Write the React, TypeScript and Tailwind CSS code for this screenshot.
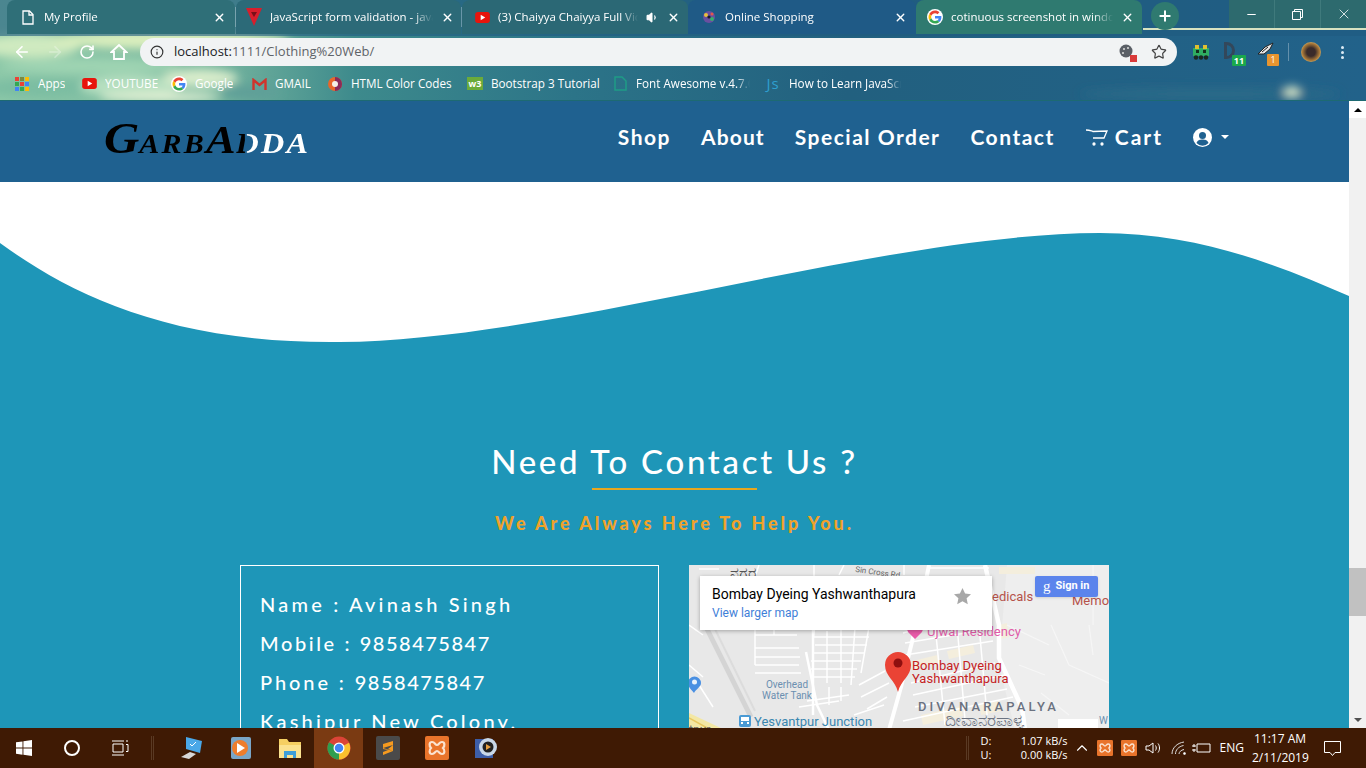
import type React from "react";
import { ArrowLeft, ArrowRight, RotateCw, Info, Star, X, Plus, Minus, ChevronUp, Volume1 } from "lucide-react";

const GoogleG = ({ size = 16 }: { size?: number }) => (
  <svg width={size} height={size} viewBox="0 0 48 48">
    <circle cx="24" cy="24" r="24" fill="#fff" />
    <path fill="#ea4335" d="M24 12.500c2.900 0 5.500 1 7.600 3l5.700-5.700C33.800 6.500 29.300 4.500 24 4.500c-7.600 0-14.200 4.400-17.400 10.800l6.600 5.100c1.600-4.600 5.900-7.900 10.800-7.900z" />
    <path fill="#4285f4" d="M43.200 24.500c0-1.300-.1-2.600-.3-3.800H24v7.500h10.800c-.5 2.500-1.900 4.600-4 6l6.300 4.900c3.700-3.400 6.100-8.500 6.100-14.600z" />
    <path fill="#fbbc05" d="M13.200 27.600c-.4-1.200-.7-2.400-.7-3.600s.2-2.500.7-3.600l-6.600-5.100C5.300 18 4.500 20.900 4.500 24s.8 6 2.100 8.700z" />
    <path fill="#34a853" d="M24 43.500c5.300 0 9.700-1.700 13-4.700l-6.300-4.900c-1.800 1.200-4.100 1.900-6.700 1.900-5.200 0-9.300-3.400-10.800-7.900l-6.600 5.100c3.200 6.100 9.800 10.500 17.400 10.500z" />
  </svg>
);

const YouTube = () => (
  <svg width="15" height="11" viewBox="0 0 16 12">
    <rect width="16" height="12" rx="3" fill="#e8140c" />
    <path d="M6 3l5 3-5 3z" fill="#fff" />
  </svg>
);

const ChromeLogo = () => (
  <svg width="24" height="24" viewBox="0 0 48 48">
    <circle cx="24" cy="24" r="23" fill="#db4437" />
    <path d="M24 24L44 13.500A23 23 0 0 1 24 47z" fill="#fbc02d" />
    <path d="M24 24L24 47A23 23 0 0 1 4 12.500z" fill="#2e9e4f" />
    <circle cx="24" cy="24" r="11" fill="#fff" />
    <circle cx="24" cy="24" r="8.500" fill="#4285f4" />
  </svg>
);

const Xampp = ({ size = 24 }: { size?: number }) => (
  <svg width={size} height={size} viewBox="0 0 24 24">
    <rect width="24" height="24" rx="2" fill="#e9742b" />
    <path d="M7 6c3 0 3 3 5 3s2-3 5-3 3 4 1 6c2 2 2 6-1 6s-3-3-5-3-2 3-5 3-3-4-1-6c-2-2-2-6 1-6z" fill="none" stroke="#fbe3d0" strokeWidth="2.200" />
  </svg>
);

interface TabProps {
  title: string;
  icon: React.ReactNode;
  className: string;
  extra?: React.ReactNode;
}

const Tab: React.FC<TabProps> = ({ title, icon, className, extra }) => (
  <div className={`${className} h-[34px] flex items-center gap-[8px] rounded-t-lg text-white`}>
    <span className="w-[16px] flex justify-center shrink-0">{icon}</span>
    <span className="flex-1 min-w-0 overflow-hidden whitespace-nowrap text-[11.500px] [mask-image:linear-gradient(to_right,black_88%,transparent)]">
      {title}
    </span>
    {extra}
    <X size={13} strokeWidth={2.500} className="shrink-0" />
  </div>
);

const Bookmark = ({ icon, label, width, clip }: { icon: React.ReactNode; label: string; width: string; clip?: string }) => (
  <div className={`${width} flex items-center gap-[8px] shrink-0`}>
    <span className="w-[16px] flex justify-center shrink-0">{icon}</span>
    <span className={`${clip ?? ""} overflow-hidden text-[11.700px] text-white whitespace-nowrap`}>{label}</span>
  </div>
);

const ChromeBar = () => (
  <div className="relative h-[101px] shrink-0 overflow-hidden bg-[linear-gradient(90deg,#8cc8a8_0%,#7ab8a0_15%,#3d8a8c_26%,#2c7488_42%,#22607f_62%,#22628a_100%)] font-['Open_Sans',sans-serif]">
    <svg className="absolute inset-0" width="1366" height="101" viewBox="0 0 1366 101">
      <defs>
        <filter id="blur-cloud" x="-30%" y="-50%" width="160%" height="200%">
          <feGaussianBlur stdDeviation="5" />
        </filter>
      </defs>
      <g filter="url(#blur-cloud)">
        <ellipse cx="30" cy="46" rx="50" ry="12" fill="#cfeac0" />
        <ellipse cx="170" cy="40" rx="120" ry="9" fill="#dcefbe" />
        <ellipse cx="90" cy="66" rx="90" ry="8" fill="#9fd4b2" />
        <ellipse cx="40" cy="88" rx="60" ry="9" fill="#7bbda2" />
        <ellipse cx="130" cy="86" rx="50" ry="11" fill="#b6dfc0" />
        <ellipse cx="200" cy="78" rx="38" ry="9" fill="#d8eccb" />
        <ellipse cx="160" cy="97" rx="60" ry="5" fill="#e2f0d4" />
        <ellipse cx="250" cy="92" rx="30" ry="7" fill="#5f9f98" />
        <ellipse cx="1210" cy="94" rx="130" ry="6" fill="#296a88" />
        <ellipse cx="1292" cy="92" rx="8" ry="6" fill="#d8e6c8" />
      </g>
      <rect x="0" y="0" width="1366" height="36" fill="#1f5a80" opacity="0.6" />
      <rect x="1143" y="28" width="223" height="2" fill="#d8e2c0" />
      <rect x="0" y="100" width="1366" height="1" fill="#1d6a72" />
    </svg>

    <div className="relative flex flex-col">
      <div className="h-[36px] flex items-start">
        <div className="w-[7px]" />
        <Tab
          title="My Profile"
          className="w-[228px] bg-[#2f6f78] pl-[13px] pr-[9px]"
          icon={
            <svg width="12" height="15" viewBox="0 0 12 15" fill="none" stroke="#fff" strokeWidth="1.300">
              <path d="M1 1h6.500L11 4.500V14H1z" />
              <path d="M7 1v4h4" />
            </svg>
          }
        />
        <div className="w-[1px] h-[20px] mt-[7px] bg-white/30" />
        <Tab
          title="JavaScript form validation - javascript"
          className="w-[225px] bg-[#2c6a78] pl-[10px] pr-[7px]"
          icon={
            <svg width="16" height="18" viewBox="0 0 16 18">
              <path d="M0 0h16L8 18z" fill="#d81e2c" />
              <path d="M5 4h6L8 9z" fill="#7a0f18" />
            </svg>
          }
        />
        <div className="w-[1px] h-[20px] mt-[7px] bg-white/30" />
        <Tab
          title="(3) Chaiyya Chaiyya Full Video Song"
          className="w-[226px] bg-[#2b6875] pl-[12px] pr-[8px]"
          icon={<YouTube />}
          extra={<Volume1 size={13} fill="#fff" className="shrink-0" />}
        />
        <Tab
          title="Online Shopping"
          className="w-[228px] bg-[#1f5a86] pl-[13px] pr-[9px]"
          icon={
            <svg width="16" height="16" viewBox="0 0 16 16">
              <circle cx="8" cy="8" r="6" fill="#6a4fa0" />
              <circle cx="5" cy="6" r="2" fill="#e8c13a" />
              <circle cx="11" cy="10" r="2" fill="#35b06a" />
              <circle cx="8" cy="8" r="1.600" fill="#1b1b2a" />
              <circle cx="11" cy="5" r="1.500" fill="#e2574c" />
            </svg>
          }
        />
        <Tab title="cotinuous screenshot in windows 10" className="w-[226px] bg-[#2f7a70] pl-[11px] pr-[8px]" icon={<GoogleG />} />
        <div className="ml-[9px] mt-[2px] w-[28px] h-[28px] rounded-full bg-[#2f7a70] flex items-center justify-center text-white">
          <Plus size={16} strokeWidth={3} />
        </div>
        <div className="ml-auto flex h-[28px] text-white">
          <div className="w-[46px] bg-[#2d6a6e] flex items-center justify-center border-r border-[#3f7a7c]">
            <Minus size={13} />
          </div>
          <div className="w-[46px] bg-[#2d6a6e] flex items-center justify-center border-r border-[#3f7a7c]">
            <svg width="11" height="11" viewBox="0 0 11 11" fill="none" stroke="#fff">
              <path d="M.5 2.500h8v8h-8zM2.500 2.500v-2h8v8h-2" />
            </svg>
          </div>
          <div className="w-[45px] bg-[#2d6a6e] flex items-center justify-center">
            <X size={16} strokeWidth={1.200} />
          </div>
        </div>
      </div>

      <div className="h-[32px] flex items-center text-white">
        <div className="w-[140px] flex items-center pl-[13px] gap-[15px]">
          <ArrowLeft size={18} strokeWidth={2.200} />
          <ArrowRight size={18} strokeWidth={2.200} className="opacity-30" />
          <RotateCw size={16} strokeWidth={2.400} />
          <svg width="18" height="18" viewBox="0 0 18 18" fill="none" stroke="#fff" strokeWidth="1.800">
            <path d="M1.500 9L9 2l7.500 7H14v7H4V9z" />
          </svg>
        </div>
        <div className="w-[1037px] h-[28px] rounded-full bg-[#f1f3f4] flex items-center pl-[10px] pr-[10px] text-[13px] text-[#5f6368]">
          <Info size={14} className="text-[#333] mr-[10px]" />
          <span className="text-[#202124]">localhost:</span>
          <span>1111/Clothing%20Web/</span>
          <span className="ml-auto relative mr-[16px] w-[16px] h-[16px]">
            <svg width="16" height="16" viewBox="0 0 16 16">
              <circle cx="7" cy="7" r="6.500" fill="#5a5f66" />
              <circle cx="5" cy="5" r="1" fill="#ddd" />
              <circle cx="9" cy="4" r="1" fill="#ddd" />
              <circle cx="4" cy="9" r="1" fill="#ddd" />
            </svg>
            <span className="absolute -right-[2px] -bottom-[2px] w-[7px] h-[7px] bg-[#d93a3a]" />
          </span>
          <Star size={16} strokeWidth={1.800} className="text-[#444]" />
        </div>
        <svg className="ml-[15px]" width="18" height="15" viewBox="0 0 18 15">
          <rect x="1" y="3" width="16" height="8" fill="#2fae62" />
          <rect x="3" y="0" width="4" height="4" fill="#e0c030" />
          <rect x="11" y="0" width="4" height="4" fill="#e0c030" />
          <rect x="4" y="5" width="3" height="3" fill="#15301f" />
          <rect x="11" y="5" width="3" height="3" fill="#15301f" />
          <circle cx="4" cy="12.500" r="2.200" fill="#1a2a20" />
          <circle cx="9" cy="12.500" r="2.200" fill="#1a2a20" />
          <circle cx="14" cy="12.500" r="2.200" fill="#1a2a20" />
        </svg>
        <div className="ml-[14px] relative w-[22px] h-[20px]">
          <span className="absolute left-[0px] top-[0px] w-[11px] h-[17px] rounded-r-full border-[3px] border-[#33475a]" />
          <span className="absolute right-[0px] bottom-[-4px] h-[11px] w-[14px] rounded-[1px] bg-[#1aa84d] text-[9px] font-bold leading-[11px] text-center text-white">11</span>
        </div>
        <div className="ml-[11px] relative w-[22px] h-[20px]">
          <svg className="absolute left-0 top-0" width="18" height="14" viewBox="0 0 18 14">
            <path d="M1 12L8 5l8-4-3 6-6 5z" fill="#e8e8e8" stroke="#222" />
            <path d="M5 10l6-5" stroke="#222" />
          </svg>
          <span className="absolute right-[0px] bottom-[-4px] h-[12px] w-[12px] rounded-[1px] bg-[#e8952f] text-[9px] leading-[12px] text-center text-white">1</span>
        </div>
        <div className="ml-[9px] w-[1px] h-[18px] bg-white/30" />
        <div className="ml-[12px] w-[20px] h-[20px] rounded-full bg-[radial-gradient(circle,#3a2b2a_30%,#a87838_60%,#e4cf90_85%)]" />
        <div className="ml-[20px] flex flex-col gap-[2px]">
          <span className="w-[3px] h-[3px] rounded-full bg-[#dceaf4]" />
          <span className="w-[3px] h-[3px] rounded-full bg-[#dceaf4]" />
          <span className="w-[3px] h-[3px] rounded-full bg-[#dceaf4]" />
        </div>
      </div>

      <div className="h-[32px] flex items-center pl-[14px]">
        <Bookmark
          width="w-[67px]"
          label="Apps"
          icon={
            <span className="grid grid-cols-3 gap-[1px]">
              {["#ea4335", "#7a8a40", "#fbbc05", "#34a853", "#ea4335", "#4285f4", "#4285f4", "#34a853", "#fbbc05"].map((c, i) => (
                <span key={i} className="w-[4px] h-[4px]" style={{ background: c }} />
              ))}
            </span>
          }
        />
        <Bookmark width="w-[90px]" label="YOUTUBE" icon={<YouTube />} />
        <Bookmark width="w-[80px]" label="Google" icon={<GoogleG />} />
        <Bookmark
          width="w-[76px]"
          label="GMAIL"
          icon={
            <svg width="15" height="12" viewBox="0 0 15 12" fill="none" stroke="#d0342c" strokeWidth="2.400">
              <path d="M1.500 12V2l6 5 6-5v10" />
            </svg>
          }
        />
        <Bookmark
          width="w-[140px]"
          label="HTML Color Codes"
          icon={
            <svg width="16" height="16" viewBox="0 0 16 16">
              <circle cx="8" cy="8" r="7" fill="#e8662a" />
              <path d="M8 1a7 7 0 0 1 0 14z" fill="#8a2a5a" />
              <circle cx="8" cy="8" r="3" fill="#f4f0e8" />
            </svg>
          }
        />
        <Bookmark
          width="w-[145px]"
          label="Bootstrap 3 Tutorial"
          clip="text-[11.400px]"
          icon={<span className="w-[16px] h-[13px] bg-[#6bab3a] text-white text-[9px] leading-[13px] font-bold text-center">w3</span>}
        />
        <Bookmark
          width="w-[153px]"
          label="Font Awesome v.4.7.0"
          clip="w-[114px] [mask-image:linear-gradient(to_right,black_88%,transparent)]"
          icon={
            <svg width="13" height="15" viewBox="0 0 13 15" fill="none" stroke="#1f9c86" strokeWidth="1.500">
              <path d="M1 1h7l4 4v9H1z" />
            </svg>
          }
        />
        <Bookmark
          width="w-[137px]"
          label="How to Learn JavaScript"
          clip="w-[112px] [mask-image:linear-gradient(to_right,black_88%,transparent)]"
          icon={<span className="text-[15px] text-[#2e9fd0] leading-none tracking-[1px]">Js</span>}
        />
      </div>
    </div>
  </div>
);

const Logo = () => (
  <div className="flex items-baseline w-[189px] font-['Liberation_Serif',serif] italic font-bold leading-none [transform:scaleX(1.110)] origin-left">
    <span className="text-[44px] text-black">G</span>
    <span className="text-[27px] text-black tracking-[2px]">ARB</span>
    <span className="text-[40px] text-black">A</span>
    <span className="text-[29px] tracking-[2px] text-transparent bg-clip-text bg-[linear-gradient(90deg,#000_38%,#1f6190_38%,#1f6190_45%,#fff_45%)]">D</span>
    <span className="text-[29px] tracking-[2px] text-white">DA</span>
  </div>
);

const NavBar = () => (
  <nav className="h-[81px] shrink-0 bg-[#1f6190] flex items-start pl-[104px] font-['Lato',sans-serif]">
    <div className="mt-[16px]">
      <Logo />
    </div>
    <div className="ml-auto mr-[120px] mt-[22px] flex items-center gap-[30px] text-white text-[21px] font-bold tracking-[1.500px] h-[28px]">
      <span>Shop</span>
      <span className="tracking-[1.100px]">About</span>
      <span>Special Order</span>
      <span>Contact</span>
      <span className="flex items-center gap-[7px] tracking-[2px]">
        <svg width="23" height="18" viewBox="0 0 23 18" fill="none" stroke="#fff" strokeWidth="1.300">
          <path d="M1 2c4 0 5 1 7 1.500L22 3l-3 7H8" />
          <circle cx="9" cy="16" r="1" fill="#fff" />
          <circle cx="17" cy="16" r="1" fill="#fff" />
        </svg>
        Cart
      </span>
      <span className="flex items-center gap-[9px]">
        <svg width="19" height="19" viewBox="0 0 19 19">
          <circle cx="9.500" cy="9.500" r="9.500" fill="#fff" />
          <circle cx="9.500" cy="7.500" r="3.500" fill="#1f6190" />
          <path d="M3.500 15c1-3 3.500-3.500 6-3.500s5 .5 6 3.500a8 8 0 0 1-12 0z" fill="#1f6190" />
        </svg>
        <span className="w-0 h-0 border-x-[4px] border-x-transparent border-t-[4px] border-t-white" />
      </span>
    </div>
  </nav>
);

const Wave = () => (
  <svg className="block shrink-0" width="1349" height="161" viewBox="0 0 1349 161">
    <rect width="1349" height="161" fill="#fff" />
    <path d="M0 61C70 112 170 162 340 160C560 158 880 52 1100 51C1200 51 1280 84 1349 114V161H0z" fill="#1e96b8" />
  </svg>
);

// thin side streets of the embedded map, in map-local coordinates
const thinRoads = [
  "M66 60V100", "M66 70H108", "M85 60V70", "M66 83H110", "M66 92H111", "M66 100H110", "M66 108H112",
  "M126 60L124 76", "M124 72H180", "M126 80H178", "M124 88H176", "M122 96H172", "M122 104H168", "M124 112H166",
  "M138 66V118", "M152 64V118", "M166 62L162 120", "M180 62L172 108",
  "M0 100L14 112", "M10 120L24 142", "M118 136L160 130", "M140 122V140", "M152 122V136",
  "M110 142L150 136", "M170 120L196 106", "M172 132L200 118", "M178 144L198 132", "M165 150L195 140",
  "M214 68L250 58", "M216 78L300 64", "M216 90L304 76", "M222 118L306 98", "M224 130L316 110", "M226 142L318 124",
  "M214 156L324 132", "M246 60L256 160", "M268 60L276 155", "M290 60L298 150",
  "M125 0V12", "M155 0L150 10", "M215 0V10", "M240 3H300", "M70 0L66 12", "M10 4H30", "M0 60L14 70",
];

// the right part of the map is much fainter
const faintRoads = ["M318 60L360 80", "M330 100L356 110", "M362 60L380 100", "M380 100L420 118", "M352 128L380 150", "M400 60L404 90", "M404 0V60"];

const beigeBlocks = ["M224 96l24-6 2 8-24 6z", "M258 86l26-6 2 8-26 6z", "M232 150l40-9 2 10-40 9z", "M290 140l20-4 2 10-20 4z", "M310 2h36v7h-36z", "M310 60l8-2 2 14-8 2z"];

const MapEmbed = () => (
  <div className="relative w-[420px] h-[220px] bg-[#e8e8e8] shrink-0 overflow-hidden font-['Roboto',sans-serif]">
    <svg className="absolute inset-0" width="420" height="220" viewBox="0 0 420 220">
      <path d="M318 0H420V220H340L310 100z" fill="#eeeeee" />
      {beigeBlocks.map((d) => (
        <path key={d} d={d} fill="#f4eedd" />
      ))}
      <g stroke="#fff" strokeWidth="1.500" fill="none">
        {thinRoads.map((d) => (
          <path key={d} d={d} />
        ))}
      </g>
      <g stroke="#f6f6f6" strokeWidth="1.200" fill="none">
        {faintRoads.map((d) => (
          <path key={d} d={d} />
        ))}
      </g>
      <path d="M16 60L62 152" stroke="#d4d4d4" strokeWidth="5" fill="none" />
      <path d="M24 60L66 146" stroke="#dcdcdc" strokeWidth="2" fill="none" />
      <path d="M240 0L232 40L212 122L200 165" stroke="#fff" strokeWidth="4" fill="none" />
      <path d="M296 0L310 60V93L333 143L336 165" stroke="#fff" strokeWidth="4.500" fill="none" />
      <path d="M117 87L128 140L140 165" stroke="#fff" strokeWidth="2.500" fill="none" />
      <path d="M124 64V150" stroke="#fff" strokeWidth="2.500" fill="none" />
      <path d="M0 148L36 165H0z" fill="#f3e7a4" />
      <path d="M0 153L22 165" stroke="#e8c860" strokeWidth="1.500" />
      <path d="M5 128c-3-4-6-6-6-10a6.500 6.500 0 0 1 13 0c0 4-5 6-7 10z" fill="#4a90e2" />
      <circle cx="5.500" cy="117" r="2.500" fill="#e8f2fc" />
      <path d="M209 127c-3-12-13-16-13-27a13 13 0 0 1 26 0c0 11-10 15-13 27z" fill="#ea4335" />
      <circle cx="209" cy="98" r="4.500" fill="#8f0f0f" />
      <path d="M226 74l-7-7a4 4 0 0 1 7-4 4 4 0 0 1 7 4z" fill="#e85aa8" />
    </svg>

    <span className="absolute left-[41px] top-[-5px] text-[16px] font-medium text-[#555] font-['Noto_Sans',sans-serif]">ನಗರ</span>
    <span className="absolute left-[166px] top-[2px] text-[8px] text-[#666] rotate-[8deg]">Sin Cross Rd</span>
    <span className="absolute left-[303px] top-[22px] text-[13px] text-[#b5524a]">edicals</span>
    <span className="absolute left-[383px] top-[26px] text-[13px] text-[#b5524a]">Memor</span>
    <span className="absolute left-[238px] top-[59px] text-[13px] leading-[15px] text-[#e05ca8]">Ujwal Residency</span>
    <span className="absolute left-[223px] top-[94px] text-[13px] leading-[13px] text-[#c5221f]">
      Bombay Dyeing
      <br />
      Yashwanthapura
    </span>
    <span className="absolute left-[58px] top-[114px] w-[80px] text-center text-[10px] leading-[11px] text-[#6b8fb0]">
      Overhead
      <br />
      Water Tank
    </span>
    <span className="absolute left-[229px] top-[132px] text-[13px] font-medium tracking-[3.100px] text-[#6b7280]">DIVANARAPALYA</span>
    <span className="absolute left-[256px] top-[143px] text-[17px] leading-[24px] font-medium text-[#6b7280] font-['Noto_Sans',sans-serif]">ದೀವಾನರಪಾಳ್ಯ</span>
    <span className="absolute left-[50px] top-[150px] w-[12px] h-[12px] rounded-[2px] bg-[#4a9ad4] flex flex-col items-center pt-[2px]">
      <span className="w-[8px] h-[4px] bg-white" />
      <span className="w-[8px] h-[2px] mt-[1px] border-x-2 border-white" />
    </span>
    <span className="absolute left-[65px] top-[147px] text-[13px] text-[#3a86b0] whitespace-nowrap">Yesvantpur Junction</span>
    <span className="absolute left-[0px] top-[156px] text-[12px] text-[#666]">tpur</span>
    <span className="absolute left-[369px] top-[154px] w-[40px] h-[20px] bg-white" />
    <span className="absolute left-[410px] top-[148px] text-[10px] text-[#6b8fb0]">W</span>

    <div className="absolute left-[11px] top-[11px] w-[292px] h-[54px] bg-white shadow-[0_1px_4px_rgba(0,0,0,0.3)] pl-[12px] pt-[10px]">
      <div className="text-[14px] leading-[16px] text-black">Bombay Dyeing Yashwanthapura</div>
      <div className="text-[12px] leading-[14px] mt-[4px] text-[#3f80d8]">View larger map</div>
      <svg className="absolute left-[254px] top-[12px]" width="17" height="17" viewBox="0 0 17 17">
        <path d="M8.500 0l2.600 5.600 5.900.7-4.400 4 1.200 6-5.300-3-5.300 3 1.200-6L0 6.300l5.900-.7z" fill="#a8a8a8" />
      </svg>
    </div>
    <div className="absolute left-[346px] top-[11px] w-[63px] h-[21px] rounded-[2px] bg-[#5b84ec] text-white flex items-center pl-[8px] gap-[5px] text-[11px] font-bold shadow-sm">
      <span className="text-[15px] font-normal leading-none font-['Liberation_Serif',serif]">g</span>
      Sign in
    </div>
  </div>
);

const ContactSection = () => (
  <section className="flex-1 bg-[#1e96b8] flex flex-col items-center pt-[98px] font-['Lato',sans-serif]">
    <h2 className="text-[33px] leading-[40px] tracking-[2.700px] text-white font-medium">Need To Contact Us ?</h2>
    <div className="mt-[7px] w-[165px] h-[2px] bg-[#e8a71f]" />
    <p className="mt-[22px] text-[18px] leading-[22px] font-black tracking-[2.900px] text-[#f0a22a]">We Are Always Here To Help You.</p>
    <div className="mt-[31px] flex gap-[30px] self-start ml-[240px]">
      <div className="w-[419px] h-[220px] border border-white pt-[19px] pl-[19px] text-[20px] leading-[39px] tracking-[3.200px] text-white font-medium shrink-0">
        <p>Name : Avinash Singh</p>
        <p className="tracking-[2.600px]">
          Mobile : <span className="tracking-[1.500px]">9858475847</span>
        </p>
        <p className="tracking-[2.900px]">
          Phone : <span className="tracking-[1.500px]">9858475847</span>
        </p>
        <p>Kashipur New Colony,</p>
      </div>
      <MapEmbed />
    </div>
  </section>
);

const Scrollbar = () => (
  <div className="w-[17px] shrink-0 bg-[#f1f1f1] flex flex-col items-center justify-between relative">
    <div className="h-[17px] flex items-center justify-center bg-white w-full">
      <span className="w-0 h-0 border-x-[4px] border-x-transparent border-b-[4px] border-b-black" />
    </div>
    <div className="absolute left-0 top-[467px] w-[17px] h-[48px] bg-[#c1c1c1]" />
    <div className="h-[17px] flex items-center justify-center w-full">
      <span className="w-0 h-0 border-x-[4px] border-x-transparent border-t-[4px] border-t-[#505050]" />
    </div>
  </div>
);

const pinned: { key: string; node: React.ReactNode; active?: boolean }[] = [
  {
    key: "pc",
    node: (
      <svg width="24" height="24" viewBox="0 0 24 24">
        <path d="M6 1l16 4-2 12-14-4z" fill="#4aa8e8" />
        <path d="M10 8l2 2 4-4" stroke="#fff" fill="none" />
        <path d="M1 21l9-5 6 2-7 5z" fill="#d8d8d8" />
      </svg>
    ),
  },
  {
    key: "media",
    node: (
      <svg width="22" height="24" viewBox="0 0 22 24">
        <rect x="1" y="1" width="20" height="22" rx="2" fill="#7aa6c8" />
        <circle cx="10" cy="12" r="8" fill="#ee7d2c" />
        <path d="M7 7l8 5-8 5z" fill="#fff" />
      </svg>
    ),
  },
  {
    key: "folder",
    node: (
      <svg width="24" height="22" viewBox="0 0 24 22">
        <path d="M1 2h8l2 3h12v16H1z" fill="#f5cf62" />
        <path d="M1 8h22v13H1z" fill="#fbe28f" />
        <path d="M6 14h12v7h-3v-3H9v3H6z" fill="#3f9ed8" />
      </svg>
    ),
  },
  { key: "chrome", node: <ChromeLogo />, active: true },
  {
    key: "sublime",
    node: (
      <svg width="24" height="24" viewBox="0 0 24 24">
        <rect width="24" height="24" rx="2" fill="#4a4a4a" />
        <path d="M7 8l10-3v4L7 12zM7 12l10 3-10 4v-3l5-2-5-1zM17 9v6l-5-2z" fill="#f59a1f" />
      </svg>
    ),
  },
  { key: "xampp", node: <Xampp /> },
  {
    key: "obs",
    node: (
      <svg width="24" height="24" viewBox="0 0 24 24">
        <rect x="1" y="3" width="18" height="19" fill="#3d5ea8" />
        <circle cx="14" cy="11" r="9" fill="#c9d8e8" />
        <circle cx="14" cy="11" r="5.500" fill="#222" />
        <path d="M12 8l5 3-5 3z" fill="#e8a040" />
      </svg>
    ),
  },
];

const Taskbar = () => (
  <div className="h-[40px] shrink-0 bg-[#3f1a04] flex items-center text-white font-['Open_Sans',sans-serif] relative">
    <div className="w-[48px] flex justify-center">
      <svg width="16" height="16" viewBox="0 0 16 16" fill="#fff">
        <path d="M0 2.300l6.500-.9v6.200H0zM7.400 1.300L16 0v7.600H7.400zM0 8.400h6.500v6.300L0 13.800zM7.400 8.400H16V16l-8.600-1.200z" />
      </svg>
    </div>
    <div className="w-[48px] flex justify-center">
      <span className="w-[16px] h-[16px] rounded-full border-2 border-white" />
    </div>
    <div className="w-[48px] flex justify-center">
      <svg width="17" height="16" viewBox="0 0 17 16" fill="none" stroke="#fff">
        <path d="M0 1h12M0 15h12M1 4h10v8H1zM14 1h2M14 4.500h2v7h-2" />
      </svg>
    </div>
    <div className="w-[3px] h-[24px] ml-[7px] mr-[13px] border-x border-[#5a3a24]" />
    <div className="flex">
      {pinned.map((p) => (
        <div key={p.key} className={`w-[49px] h-[40px] flex items-center justify-center ${p.active ? "bg-[#7a3a12]" : ""}`}>
          {p.node}
        </div>
      ))}
    </div>

    <div className="ml-auto flex items-center h-full text-[11px]">
      <div className="w-[3px] h-[24px] border-x border-[#5a3a24] mr-[12px]" />
      <div className="w-[30px] leading-[14px]">
        <div>D:</div>
        <div>U:</div>
      </div>
      <div className="w-[54px] text-right leading-[14px] ml-[3px] whitespace-nowrap">
        <div>1.07 kB/s</div>
        <div>0.00 kB/s</div>
      </div>
      <ChevronUp size={18} strokeWidth={1.500} className="ml-[5px]" />
      <div className="ml-[6px] flex gap-[8px]">
        <Xampp size={16} />
        <Xampp size={16} />
      </div>
      <svg className="ml-[8px]" width="17" height="14" viewBox="0 0 17 14" fill="none" stroke="#fff">
        <path d="M1 5h3l4-3v10l-4-3H1zM10.500 4.500c1 1.500 1 3.500 0 5M13 2.500c2 2.500 2 6.500 0 9" />
      </svg>
      <svg className="ml-[9px]" width="16" height="14" viewBox="0 0 16 14" fill="none" stroke="#ddd">
        <path d="M1 13c0-6 5-11 12-12M4.500 13c0-4 3-7.500 8-8.500M8 13c0-2 2-4 5-4.500" />
        <circle cx="13.500" cy="12.500" r="1" fill="#fff" />
      </svg>
      <svg className="ml-[4px]" width="20" height="12" viewBox="0 0 20 12" fill="none" stroke="#fff">
        <path d="M6 2h13v8H6zM1 4h4M1 8h4M3 2v3M3 7v3" />
      </svg>
      <span className="ml-[9px] text-[12px]">ENG</span>
      <div className="ml-[8px] w-[56px] text-center text-[12px] leading-[19px] whitespace-nowrap">
        <div>11:17 AM</div>
        <div>2/11/2019</div>
      </div>
      <svg className="ml-[16px] mr-[25px]" width="17" height="17" viewBox="0 0 17 17" fill="none" stroke="#fff">
        <path d="M.5 1.500h16v11H11L8.500 15.500 6 12.500H.5z" />
      </svg>
    </div>
  </div>
);

export default function App() {
  return (
    <div className="w-[1366px] h-[768px] overflow-hidden flex flex-col bg-white">
      <ChromeBar />
      <div className="flex-1 flex min-h-0">
        <main className="w-[1349px] flex flex-col overflow-hidden">
          <NavBar />
          <Wave />
          <ContactSection />
        </main>
        <Scrollbar />
      </div>
      <Taskbar />
    </div>
  );
}
